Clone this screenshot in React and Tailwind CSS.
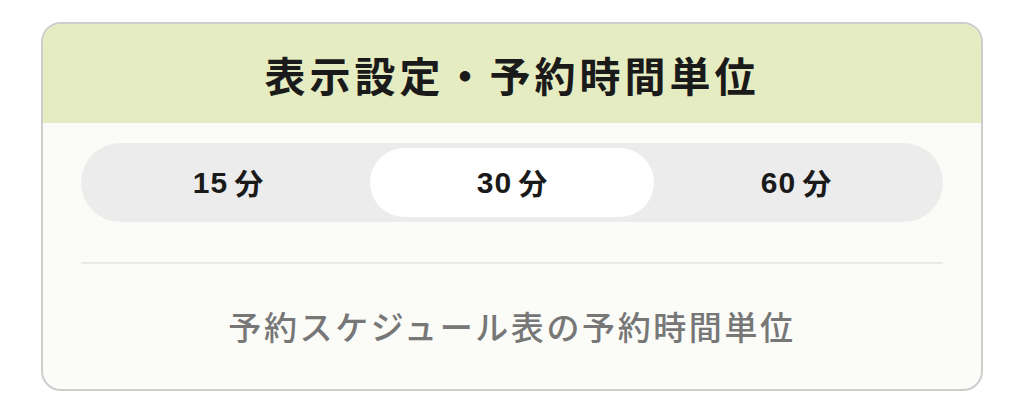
import { useState } from 'react';

const options = ['15', '30', '60'];

export default function App() {
  const [unit, setUnit] = useState('30');
  return (
    <div
      className="w-[1024px] h-[404px] bg-white pt-[22px] px-[41px]"
      style={{ fontFamily: '"Noto Sans CJK JP", "Noto Sans", sans-serif' }}
    >
      <div className="w-[942px] h-[369px] rounded-[20px] border-2 border-[#cdcdcd] bg-[#fbfcf8] overflow-hidden flex flex-col">
        <div className="h-[99px] bg-[#e6ecc1] flex items-center justify-center pt-[2px]">
          <h1 className="text-[41px] font-bold text-[#1a1a1a] tracking-[4px] leading-none">
            表示設定・予約時間単位
          </h1>
        </div>
        <div className="flex-1 px-[38px] pt-[20px]">
          <div className="h-[79px] rounded-full bg-[#ececec] p-[5px] grid grid-cols-3">
            {options.map((o) => (
              <button
                key={o}
                onClick={() => setUnit(o)}
                className={
                  unit === o
                    ? 'rounded-full bg-white flex items-center justify-center font-bold text-[#1a1a1a]'
                    : 'rounded-full flex items-center justify-center font-bold text-[#1a1a1a]'
                }
              >
                <span
                  className="text-[30px] tracking-[1px] leading-none"
                  style={{ fontFamily: '"Liberation Sans", Arial, sans-serif' }}
                >
                  {o}
                </span>
                <span className="ml-[6px] text-[29px] leading-none">分</span>
              </button>
            ))}
          </div>
          <div className="mt-[40px] h-[2px] bg-[#e9e9e9]" />
          <p className="mt-[46px] text-center text-[33px] font-medium text-[#777777] tracking-[2.6px] leading-none">
            予約スケジュール表の予約時間単位
          </p>
        </div>
      </div>
    </div>
  );
}
